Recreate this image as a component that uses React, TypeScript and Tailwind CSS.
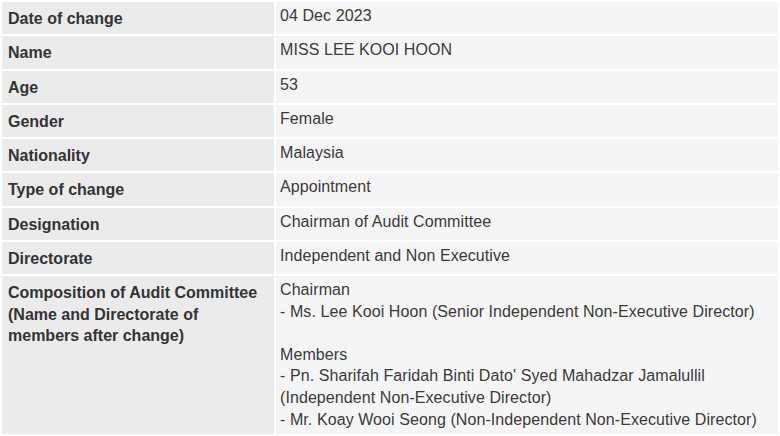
const rows: [string, string[]][] = [
  ["Date of change", ["04 Dec 2023"]],
  ["Name", ["MISS LEE KOOI HOON"]],
  ["Age", ["53"]],
  ["Gender", ["Female"]],
  ["Nationality", ["Malaysia"]],
  ["Type of change", ["Appointment"]],
  ["Designation", ["Chairman of Audit Committee"]],
  ["Directorate", ["Independent and Non Executive"]],
  [
    "Composition of Audit Committee (Name and Directorate of members after change)",
    [
      "Chairman",
      "- Ms. Lee Kooi Hoon (Senior Independent Non-Executive Director)",
      "",
      "Members",
      "- Pn. Sharifah Faridah Binti Dato' Syed Mahadzar Jamalullil",
      "(Independent Non-Executive Director)",
      "- Mr. Koay Wooi Seong (Non-Independent Non-Executive Director)",
    ],
  ],
];

export default function App() {
  return (
    <div className="w-[780px] h-[436px] overflow-hidden bg-white font-['Liberation_Sans',Arial,sans-serif] text-[16px] leading-[21.6px] text-[#333]">
      <table className="w-full border-separate border-spacing-[2px]">
        <tbody>
          {rows.map(([label, lines], i) => (
            <tr key={i} className={lines.length > 1 ? "" : "h-[32.25px]"}>
              <td className="w-[272px] bg-[#ebebeb] pl-[6px] pr-2 pt-[6px] pb-0 align-top font-bold">
                {label}
              </td>
              <td className="bg-[#f5f5f5] pl-[4px] pr-2 pt-[3px] pb-1 align-top text-[#3a3a3a] tracking-[0.08px]">
                {lines.map((l, j) => (
                  <div key={j} className="h-[21.6px] whitespace-nowrap">
                    {l}
                  </div>
                ))}
              </td>
            </tr>
          ))}
        </tbody>
      </table>
    </div>
  );
}
